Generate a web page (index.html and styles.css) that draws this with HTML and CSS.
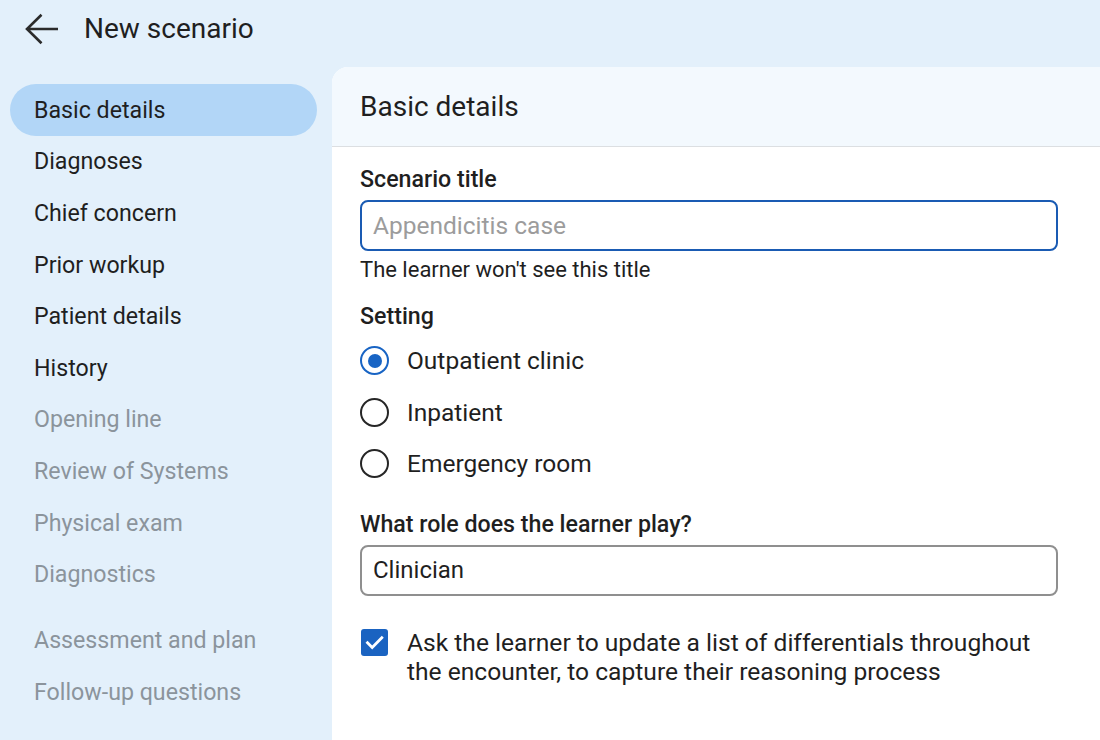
FILE: index.html
```html
<!DOCTYPE html>
<html lang="en">
<head>
<meta charset="utf-8">
<title>New scenario</title>
<link rel="stylesheet" href="styles.css">
</head>
<body>
<header class="topbar">
  <svg class="back" width="36" height="32" viewBox="0 0 36 32" aria-hidden="true">
    <path d="M3 16 H34 M17.5 1.8 L3 16 L17.5 30.2" fill="none" stroke="#2b2b2b" stroke-width="2.6" stroke-linecap="butt" stroke-linejoin="miter"/>
  </svg>
  <h1 class="page-title">New scenario</h1>
</header>
<div class="layout">
  <nav class="sidebar">
    <a class="nav-item active">Basic details</a>
    <a class="nav-item">Diagnoses</a>
    <a class="nav-item">Chief concern</a>
    <a class="nav-item">Prior workup</a>
    <a class="nav-item">Patient details</a>
    <a class="nav-item">History</a>
    <a class="nav-item muted">Opening line</a>
    <a class="nav-item muted">Review of Systems</a>
    <a class="nav-item muted">Physical exam</a>
    <a class="nav-item muted">Diagnostics</a>
    <div class="nav-gap"></div>
    <a class="nav-item muted">Assessment and plan</a>
    <a class="nav-item muted">Follow-up questions</a>
  </nav>
  <main class="panel">
    <div class="panel-head">
      <h2 class="panel-title">Basic details</h2>
    </div>
    <div class="panel-body">
      <label class="field-label">Scenario title</label>
      <div class="input focused"><span class="placeholder">Appendicitis case</span></div>
      <p class="helper">The learner won't see this title</p>

      <div class="field-label setting">Setting</div>
      <div class="radios">
        <div class="radio-row"><span class="radio checked"></span><span>Outpatient clinic</span></div>
        <div class="radio-row"><span class="radio"></span><span>Inpatient</span></div>
        <div class="radio-row"><span class="radio"></span><span>Emergency room</span></div>
      </div>

      <div class="field-label role">What role does the learner play?</div>
      <div class="input"><span class="value">Clinician</span></div>

      <div class="check-row">
        <span class="checkbox">
          <svg width="27" height="27" viewBox="0 0 27 27" aria-hidden="true">
            <path d="M6.5 13.8 L11.2 18.5 L20.8 8.8" fill="none" stroke="#fff" stroke-width="2.8" stroke-linecap="square"/>
          </svg>
        </span>
        <span class="check-text">Ask the learner to update a list of differentials throughout the encounter, to capture their reasoning process</span>
      </div>
    </div>
  </main>
</div>
</body>
</html>
```
FILE: styles.css
```css
* { box-sizing: border-box; }
html, body { margin: 0; padding: 0; }
body {
  width: 1100px;
  height: 740px;
  overflow: hidden;
  background: #e3f0fb;
  font-family: Roboto, "Noto Sans", "Liberation Sans", sans-serif;
  color: #1f1f1f;
}
.topbar {
  height: 58px;
  display: flex;
  align-items: center;
  padding-left: 24px;
}
.back { display: block; }
.page-title {
  margin: 0 0 0 24px;
  font-size: 28px;
  font-weight: 400;
  line-height: 32px;
  color: #1f1f1f;
}
.layout {
  display: flex;
  height: 682px;
}
.sidebar {
  width: 332px;
  flex: none;
  padding-top: 26px;
  display: flex;
  flex-direction: column;
}
.nav-item {
  display: flex;
  align-items: center;
  height: 51.6px;
  margin: 0 15px 0 10px;
  padding-left: 24px;
  border-radius: 26px;
  font-size: 23.2px;
  color: #1f1f1f;
}
.nav-item.active { background: #b2d6f7; }
.nav-item.muted { color: #8b949c; }
.nav-gap { height: 14.5px; }
.panel {
  flex: 1;
  margin-top: 9px;
  background: #fff;
  border-top-left-radius: 16px;
  overflow: hidden;
}
.panel-head {
  height: 80px;
  background: #f3f9fe;
  border-bottom: 1px solid #dcdfe2;
  display: flex;
  align-items: center;
  padding-left: 28px;
}
.panel-title {
  margin: 0;
  font-size: 28px;
  font-weight: 400;
  line-height: 32px;
  color: #1f1f1f;
}
.panel-body {
  padding: 20px 42px 0 28px;
  display: flex;
  flex-direction: column;
}
.field-label {
  display: block;
  font-size: 23.2px;
  font-weight: 500;
  line-height: 24px;
  margin-bottom: 9px;
}
.input {
  height: 51px;
  border: 2px solid #8f8f8f;
  border-radius: 8px;
  display: flex;
  align-items: center;
  padding-left: 11px;
  font-size: 24px;
}
.input.focused { border-color: #1a5bb3; }
.placeholder { color: #9c9c9c; font-size: 24.5px; }
.value { color: #1f1f1f; }
.helper {
  margin: 7px 0 0 0;
  font-size: 22px;
  line-height: 24px;
  color: #1f1f1f;
}
.setting { margin-top: 22px; margin-bottom: 7px; }
.radios { display: flex; flex-direction: column; }
.radio-row {
  height: 51.5px;
  display: flex;
  align-items: center;
  gap: 18px;
  font-size: 24.5px;
}
.radio {
  width: 29px;
  height: 29px;
  border: 2.5px solid #262626;
  border-radius: 50%;
  display: flex;
  align-items: center;
  justify-content: center;
  flex: none;
}
.radio.checked { border-color: #1864c4; }
.radio.checked::after {
  content: "";
  width: 14px;
  height: 14px;
  border-radius: 50%;
  background: #1864c4;
}
.role { margin-top: 22px; }
.check-row {
  margin-top: 32px;
  display: flex;
  align-items: flex-start;
  gap: 19px;
}
.checkbox {
  width: 27px;
  height: 27px;
  margin: 1px 0 0 1px;
  border-radius: 3px;
  background: #1a63c1;
  flex: none;
}
.checkbox svg { display: block; }
.check-text {
  font-size: 24.6px;
  line-height: 29px;
  color: #1f1f1f;
}
```
